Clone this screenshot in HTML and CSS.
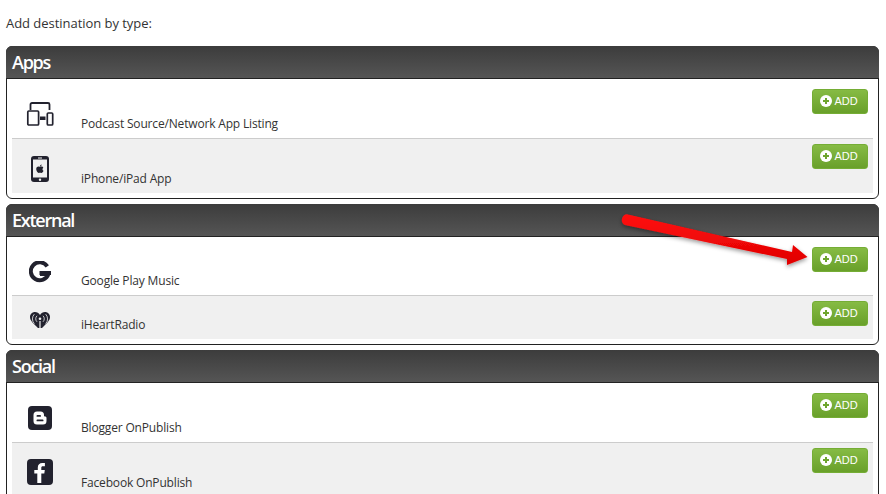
FILE: index.html
```html
<!DOCTYPE html>
<html lang="en">
<head>
    <meta charset="UTF-8">
    <title>Add destination</title>
    <link rel="stylesheet" href="styles.css">
</head>
<body>
    <p class="intro">Add destination by type:</p>

    <section class="panel">
        <h2 class="panel-title">Apps</h2>
        <div class="row row-first">
            <div class="row-icon">
                <svg width="28" height="24" viewBox="0 0 28 24"><path d="M4.500 8V2.500A1.500 1.500 0 0 1 6 1H22A1.500 1.500 0 0 1 23.500 2.500V8" fill="none" stroke="#22222e" stroke-width="1.800"/><rect x="1.800" y="9" width="10.800" height="14" rx="1" fill="#fff" stroke="#22222e" stroke-width="1.700"/><rect x="14" y="14.500" width="5.500" height="3.500" fill="#22222e"/><rect x="21.300" y="11" width="5.400" height="12" rx="1" fill="#fff" stroke="#22222e" stroke-width="1.700"/></svg>
            </div>
            <span class="row-name">Podcast Source/Network App Listing</span>
            <button class="add-btn"><span class="add-icon"></span>ADD</button>
        </div>
        <div class="row row-alt">
            <div class="row-icon">
                <svg width="18" height="26" viewBox="0 0 18 26"><rect x="0" y="0" width="18" height="26" rx="3" fill="#22222e"/><rect x="2" y="3.500" width="14" height="18" fill="#f0f0f0"/><rect x="7" y="1.500" width="4" height="1" fill="#f0f0f0"/><circle cx="9" cy="23.700" r="1.200" fill="#f0f0f0"/><path d="M9 11c1-.6 3-.6 3.300.8-1.200.8-1 2.500.2 3-.5 1.300-1.300 2.400-2.200 2.300-.6-.1-.9-.3-1.300-.3s-.8.200-1.300.3c-1.300 0-2.500-2.400-2.500-4 0-2.300 2.300-3 3.800-2.100zM9 10.500c0-1 .7-1.800 1.700-1.900 0 1-.7 1.800-1.700 1.900z" fill="#22222e"/></svg>
            </div>
            <span class="row-name">iPhone/iPad App</span>
            <button class="add-btn"><span class="add-icon"></span>ADD</button>
        </div>
    </section>

    <section class="panel">
        <h2 class="panel-title">External</h2>
        <div class="row row-first row-google">
            <div class="row-icon">
                <svg width="22" height="22" viewBox="0 0 22 22"><path d="M18.300 5.300A9 9 0 1 0 19.400 13H11" fill="none" stroke="#22222e" stroke-width="4"/><rect x="10.500" y="10" width="11.500" height="4" fill="#22222e"/></svg>
            </div>
            <span class="row-name">Google Play Music</span>
            <button class="add-btn"><span class="add-icon"></span>ADD</button>
        </div>
        <div class="row row-alt row-short">
            <div class="row-icon">
                <svg width="20" height="16" viewBox="0 0 20 16"><path d="M10 3C9 1 7 0 5 0 2.200 0 0 2.300 0 5c0 3.500 3 6 6.500 9.500L8 16h4l1.500-1.500C17 11 20 8.500 20 5c0-2.700-2.200-5-5-5-2 0-4 1-5 3z" fill="#22222e"/><path d="M7 3.800a4.200 4.200 0 0 0 0 6M13 3.800a4.200 4.200 0 0 1 0 6M4.300 2.200a7 7 0 0 0 0 9.500M15.700 2.200a7 7 0 0 1 0 9.500" fill="none" stroke="#f0f0f0" stroke-width=".8"/><circle cx="10" cy="6.800" r="1.300" fill="#f0f0f0"/><path d="M10 9v7" stroke="#f0f0f0" stroke-width="1.200"/></svg>
            </div>
            <span class="row-name">iHeartRadio</span>
            <button class="add-btn"><span class="add-icon"></span>ADD</button>
        </div>
    </section>

    <section class="panel">
        <h2 class="panel-title">Social</h2>
        <div class="row row-first">
            <div class="row-icon">
                <svg width="24" height="24" viewBox="0 0 24 24"><rect width="24" height="24" rx="4" fill="#22222e"/><path d="M9 5.500h3.500a3.500 3.500 0 0 1 3.500 3.500v.8c0 .6.500.7 1 .7.800 0 1.500.500 1.500 1.500V15a3.500 3.500 0 0 1-3.500 3.500H9A3.500 3.500 0 0 1 5.500 15V9A3.500 3.500 0 0 1 9 5.500z" fill="#fff"/><rect x="8.500" y="9" width="4.500" height="1.800" rx=".9" fill="#22222e"/><rect x="8.500" y="13.500" width="7" height="1.800" rx=".9" fill="#22222e"/></svg>
            </div>
            <span class="row-name">Blogger OnPublish</span>
            <button class="add-btn"><span class="add-icon"></span>ADD</button>
        </div>
        <div class="row row-alt row-facebook">
            <div class="row-icon">
                <svg width="26" height="26" viewBox="0 0 26 26"><rect width="26" height="26" rx="4" fill="#22222e"/><path d="M14.300 24V14.500h3l.5-3.500h-3.500V8.900c0-1 .3-1.700 1.800-1.700h1.800V4.100c-.4 0-1.400-.1-2.600-.1-2.700 0-4.500 1.600-4.500 4.500V11H7.300v3.500h3V24z" fill="#fff"/></svg>
            </div>
            <span class="row-name">Facebook OnPublish</span>
            <button class="add-btn"><span class="add-icon"></span>ADD</button>
        </div>
    </section>

    <!-- annotation drawn over the page -->
    <svg class="arrow" width="886" height="494" viewBox="0 0 886 494">
        <defs>
            <filter id="arrowShadow" x="-10%" y="-30%" width="120%" height="170%">
                <feDropShadow dx="0" dy="2" stdDeviation="2" flood-color="#000" flood-opacity=".4"/>
            </filter>
            <linearGradient id="arrowFill" x1="0" y1="0" x2="0" y2="1">
                <stop offset="0" stop-color="#ff1010"/>
                <stop offset="1" stop-color="#e00000"/>
            </linearGradient>
        </defs>
        <path d="M628 214.500L792 252L793 245L807.500 257L787 265L787 259L625 225Q621 223 622 218.500Q624 213.500 628 214.500Z" fill="url(#arrowFill)" filter="url(#arrowShadow)"/>
    </svg>
</body>
</html>
```

FILE: styles.css
```css
html, body {
    height: 494px;
    overflow: hidden;
}
body {
    margin: 0;
    padding: 0 7px 0 6px;
    font-family: "Open Sans", sans-serif;
    font-size: 12px;
    letter-spacing: -0.17px;
    color: #333;
    background-color: #fff;
}
.intro {
    margin: 0;
    padding-top: 14px;
    height: 46px;
    box-sizing: border-box;
    font-size: 13px;
    letter-spacing: -0.04px;
    line-height: 18px;
}
.panel {
    border: 1px solid #222;
    border-radius: 6px;
    padding: 0 5px 5px;
    margin-bottom: 5px;
}
.panel-title {
    margin: -1px -6px 0;
    height: 33px;
    padding: 0 6px;
    box-sizing: border-box;
    border-radius: 6px 6px 0 0;
    border-bottom: 1px solid #222;
    background: linear-gradient(#3c3c3c, #555);
    color: #fff;
    font-size: 18px;
    font-weight: 600;
    line-height: 32px;
    letter-spacing: -1.25px;
}
.row {
    display: flex;
    align-items: flex-end;
    height: 55px;
    padding: 5px 5px 0 0;
    box-sizing: border-box;
    border-bottom: 1px solid #ccc;
}
.row-first {
    height: 60px;
    padding-top: 10px;
}
.row-google {
    height: 59px;
}
.row-alt {
    height: 54px;
    background-color: #f0f0f0;
    border-bottom: none;
}
.row-short {
    height: 43px;
}
.row-icon {
    width: 56px;
    margin-right: 13px;
    padding-bottom: 11px;
    display: flex;
    justify-content: center;
}
.row-first .row-icon,
.row-facebook .row-icon {
    padding-bottom: 12px;
}
.row-icon svg {
    display: block;
}
.row-name {
    flex: 1;
    padding-bottom: 5px;
    line-height: 18px;
}
.add-btn {
    align-self: flex-start;
    display: flex;
    align-items: center;
    justify-content: center;
    width: 56px;
    height: 25px;
    padding: 0 2px 2px 0;
    border: 1px solid #75ad35;
    border-radius: 3px;
    background: linear-gradient(#86bb44, #69a02a);
    color: #fff;
    font-family: "Liberation Sans", sans-serif;
    font-size: 11px;
    letter-spacing: 0;
}
.add-icon {
    position: relative;
    width: 12px;
    height: 12px;
    margin-right: 2px;
    border-radius: 50%;
    background-color: #fff;
}
.add-icon::before,
.add-icon::after {
    content: "";
    position: absolute;
    background-color: #6ea52e;
}
.add-icon::before {
    left: 3px;
    top: 5px;
    width: 6px;
    height: 2px;
}
.add-icon::after {
    left: 5px;
    top: 3px;
    width: 2px;
    height: 6px;
}
.arrow {
    position: absolute;
    left: 0;
    top: 0;
    pointer-events: none;
}
```
